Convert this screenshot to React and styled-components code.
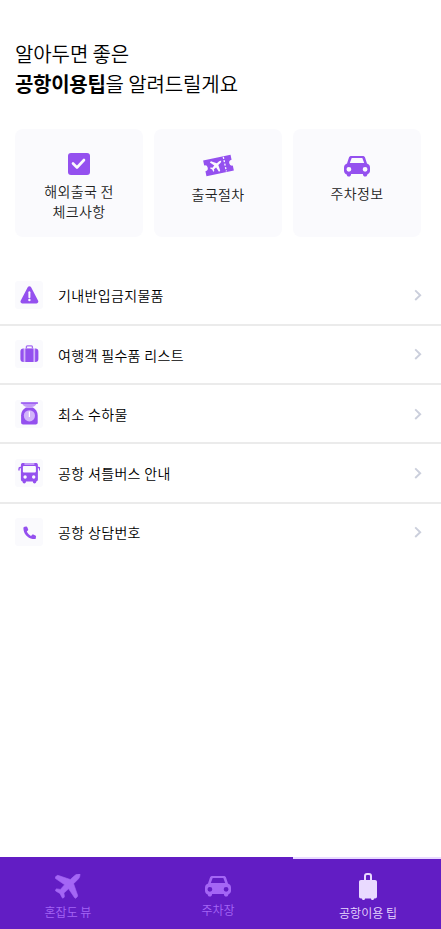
import React from 'react';
import styled, { createGlobalStyle, css } from 'styled-components';

const GlobalStyle = createGlobalStyle`
  * {
    box-sizing: border-box;
  }

  body {
    margin: 0;
    background: #fff;
    color: #000;
    font-family: 'Noto Sans CJK KR', sans-serif;
  }
`;

const Page = styled.div`
  display: flex;
  flex-direction: column;
  height: 100vh;
  overflow: hidden;
`;

const Title = styled.h1`
  margin: 39px 0 0 15px;
  font-size: 20px;
  font-weight: 350;
  line-height: 30px;
  letter-spacing: -0.1px;
  white-space: nowrap;
`;

const Strong = styled.strong`
  font-weight: 700;
  letter-spacing: -0.3px;
`;

const CardList = styled.div`
  display: grid;
  grid-template-columns: repeat(3, 1fr);
  gap: 11px;
  margin: 30px 20px 0 15px;
`;

const Card = styled.button`
  display: flex;
  flex-direction: column;
  align-items: center;
  height: 108px;
  padding: ${(props) => props.$top}px 0 0;
  border: 0;
  border-radius: 8px;
  background: #fafafd;
`;

const CardLabel = styled.span`
  margin-top: ${(props) => props.$gap}px;
  color: #222;
  font-family: 'Noto Sans CJK KR', sans-serif;
  font-size: 14px;
  font-weight: 350;
  line-height: 20px;
  letter-spacing: 0.35px;
  text-align: center;
  white-space: pre-line;
`;

const TipList = styled.ul`
  margin: 29.6px 0 0;
  padding: 0;
  list-style: none;
`;

const TipItem = styled.li`
  display: flex;
  align-items: center;
  height: 59.25px;
  padding: 0 19px 0 15px;
  border-bottom: 2px solid #ebebeb;

  &:last-child {
    border-bottom-color: transparent;
  }
`;

const IconBox = styled.span`
  display: flex;
  align-items: center;
  justify-content: center;
  width: 28px;
  height: 28px;
  border-radius: 3px;
  background: #fafafd;
`;

const TipLabel = styled.span`
  flex: 1;
  margin-left: 15px;
  padding-top: 0.5px;
  font-size: 14px;
  font-weight: 350;
  line-height: 20px;
  letter-spacing: 0.35px;
`;

const TabBar = styled.nav`
  display: grid;
  flex: none;
  grid-template-columns: repeat(3, 150px);
  height: 72px;
  margin-top: auto;
  margin-left: -7px;
  background: #621dc4;
`;

const Tab = styled.a`
  display: flex;
  flex-direction: column;
  align-items: center;
  padding-top: ${(props) => props.$top}px;
  border-top: 2px solid transparent;
  color: #a466f5;

  ${(props) =>
    props.$active &&
    css`
      border-top-color: #e9daff;
      color: #e9daff;
    `}
`;

const TabLabel = styled.span`
  margin-top: ${(props) => props.$gap}px;
  font-size: 12px;
  font-weight: 350;
  line-height: 18px;
`;

const Svg = styled.svg`
  display: block;
  flex: none;
`;

const CheckIcon = () => (
  <Svg width="22" height="22" viewBox="0 0 22 22">
    <rect width="22" height="22" rx="3" fill="#9450ef" />
    <path d="M5 10.500l4 4 7-7.500" fill="none" stroke="#fafafd" strokeWidth="2.600" strokeLinecap="round" strokeLinejoin="round" />
  </Svg>
);

const planePath =
  'M25 0c-2-.3-4 .3-5.3 1.6L15.300 5.500 3.500 1.500C2.700 1.200 2 1.400 1.400 2L.4 3c-.5.600-.4 1.200.2 1.600l9 6.100-4.200 4.700-3.200-.5c-.5-.1-.8 0-1.100.3l-.6.7c-.4.4-.3.900.2 1.200l4.200 2.300 2.300 4.300c.3.600.8.700 1.200.2l.7-.7c.3-.3.400-.6.300-1l-.5-3.200 4.700-4.200 6 8.900c.4.600 1 .7 1.500.2l1-1c.5-.5.700-1.100.4-2L18.600 9.700l4.500-4.500C24.500 3.800 25.100 2 25 0z';

const TicketIcon = () => (
  <Svg width="31" height="23" viewBox="0 0 31 23">
    <g transform="rotate(-12 15.500 11.500)">
      <path d="M1.500 3.500h28v5a3 3 0 0 0 0 6v5h-28v-5a3 3 0 0 0 0-6z" fill="#9450ef" />
      <path d="M22 4v15" stroke="#fafafd" strokeWidth="1.300" strokeDasharray="2 1.500" />
      <g transform="translate(7 6) rotate(12 5 5) scale(.45)">
        <path d={planePath} fill="#fafafd" />
      </g>
    </g>
  </Svg>
);

const CarIcon = () => (
  <Svg width="26" height="21" viewBox="0 0 26 21">
    <path
      fill="currentColor"
      fillRule="evenodd"
      d="M7.500 0h11c1.400 0 2.300.6 2.700 1.900L23 7.500c2 .7 3 2.200 3 4.300v2.900c0 1.400-.6 2.500-1.700 3.100-.4.300-.7.500-1 .6-.2 1.500-1.100 2.200-2.200 2.200S19 19.900 18.900 18H7.100c-.1 1.900-1.100 2.600-2.200 2.600s-2-.7-2.200-2.200C1 17.900 0 16.600 0 14.700v-2.900c0-2.100 1-3.600 3-4.300l1.800-5.600C5.200.6 6.100 0 7.500 0zm.2 2L5.800 7h14.400l-1.900-5zM4.900 10.900a2.400 2.400 0 1 0 0 4.800 2.400 2.400 0 0 0 0-4.800zm16.200 0a2.400 2.400 0 1 0 0 4.800 2.400 2.400 0 0 0 0-4.800z"
    />
  </Svg>
);

const WarningIcon = () => (
  <Svg width="20" height="18" viewBox="-.4 0 20 18">
    <path d="M8.300 1.200c.8-1.400 2.600-1.400 3.400 0l6.900 13.300c.8 1.400 0 2.900-1.600 2.900H3c-1.600 0-2.400-1.500-1.600-2.900z" fill="#9450ef" />
    <path d="M10 6.300v5" stroke="#fafafd" strokeWidth="2" strokeLinecap="round" />
    <circle cx="10" cy="14" r="1.200" fill="#fafafd" />
  </Svg>
);

const SuitcaseIcon = () => (
  <Svg width="20" height="18" viewBox="-.4 0 20 18">
    <path d="M7 3.500V1.800C7 1.200 7.300.9 7.900.9h4.200c.6 0 .9.3.9.9v1.700" fill="none" stroke="#a56bf3" strokeWidth="1.300" />
    <rect x="4" y="3.500" width="12" height="13.500" fill="#d2b5fa" />
    <path d="M4.300 3.500v13.500H4a3 3 0 0 1-3-3V6.500a3 3 0 0 1 3-3zM6 3.500h8v13.500H6zM15.700 3.500H16a3 3 0 0 1 3 3V14a3 3 0 0 1-3 3h-.3z" fill="#9450ef" />
  </Svg>
);

const ScaleIcon = () => (
  <Svg width="18" height="23" viewBox="-.4 .5 18 23">
    <path d="M1.500 1.500h15c-1 2.700-3 4-5.500 4H7c-2.500 0-4.500-1.300-5.500-4z" fill="#c29af8" />
    <path d="M1 1.500h16" stroke="#9450ef" strokeWidth="1.400" strokeLinecap="round" />
    <path d="M5.500 6h7c3 1.500 4.800 4.500 4.800 8v7c0 1.300-.8 2-2 2H2.700c-1.200 0-2-.7-2-2v-7c0-3.500 1.800-6.500 4.800-8z" fill="#9450ef" />
    <circle cx="9" cy="14.300" r="5.600" fill="#d2b5fa" />
    <path d="M9 10v5.500" stroke="#fff" strokeWidth="1.200" />
  </Svg>
);

const BusIcon = () => (
  <Svg width="22" height="22" viewBox="-.4 0 22 22">
    <path d="M3 5.500H1.800C1 5.500.6 6 .6 7v1.500M19 5.500h1.200c.8 0 1.200.5 1.200 1.500v1.500" fill="none" stroke="#9450ef" strokeWidth="1.400" />
    <path d="M4 1h14c1 0 1.500 1 1.500 2.500v14c0 1-.7 1.700-1.700 1.900V20c0 1.900-3.300 1.900-3.300 0v-.5h-7V20c0 1.900-3.300 1.900-3.300 0v-.6c-1-.2-1.700-.9-1.700-1.900v-14C2.500 2 3 1 4 1z" fill="#9450ef" />
    <rect x="6" y="1" width="10" height="2" fill="#c29af8" />
    <rect x="4.500" y="4" width="13" height="6.500" rx="1" fill="#fafafd" />
    <circle cx="6.700" cy="15" r="1.700" fill="#fafafd" />
    <circle cx="15.300" cy="15" r="1.700" fill="#fafafd" />
  </Svg>
);

const PhoneIcon = () => (
  <Svg width="14" height="14" viewBox="-.6 -1 14 14">
    <path
      d="M2 .8l1.500-.2c.6-.1 1 .2 1.200.7l.8 2c.2.500.1 1-.3 1.300L4.200 5.500c.8 1.900 2.200 3.400 4.200 4.400l1-1c.4-.4.8-.5 1.300-.3l2 .8c.5.2.8.700.7 1.200l-.2 1.600c-.1.700-.5 1-1.100 1C5.600 13 .8 8.400.8 2c0-.7.500-1.100 1.200-1.200z"
      fill="#9450ef"
    />
  </Svg>
);

const ArrowIcon = () => (
  <Svg width="8" height="12" viewBox="0.300 -.2 8 12">
    <path d="M1.500 1.200l5 4.800-5 4.800" fill="none" stroke="#cbcfdc" strokeWidth="1.900" />
  </Svg>
);

const PlaneIcon = () => (
  <Svg width="27" height="25" viewBox="0 0 27 25">
    <path d={planePath} fill="currentColor" stroke="currentColor" strokeWidth=".6" />
  </Svg>
);

const LuggageIcon = () => (
  <Svg width="18" height="27" viewBox="0 0 18 27">
    <path d="M6 7V3c0-1.200.7-2 2-2h2c1.300 0 2 .8 2 2v4" fill="none" stroke="currentColor" strokeWidth="2" />
    <path d="M2 7h14c1.300 0 2 .7 2 2v14.500c0 1.300-.7 2-2 2h-1c0 2-3 2-3 0H6c0 2-3 2-3 0H2c-1.300 0-2-.7-2-2V9c0-1.300.7-2 2-2z" fill="currentColor" />
  </Svg>
);

const Purple = styled.span`
  color: #9450ef;
`;

const tips = [
  { label: '기내반입금지물품', icon: <WarningIcon /> },
  { label: '여행객 필수품 리스트', icon: <SuitcaseIcon /> },
  { label: '최소 수하물', icon: <ScaleIcon /> },
  { label: '공항 셔틀버스 안내', icon: <BusIcon /> },
  { label: '공항 상담번호', icon: <PhoneIcon /> },
];

export default () => (
  <>
    <GlobalStyle />
    <Page>
      <Title>
        알아두면 좋은
        <br />
        <Strong>공항이용팁</Strong>을 알려드릴게요
      </Title>

      {/* Cards */}
      <CardList>
        <Card $top={24}>
          <CheckIcon />
          <CardLabel $gap={6}>{'해외출국 전\n체크사항'}</CardLabel>
        </Card>
        <Card $top={25}>
          <TicketIcon />
          <CardLabel $gap={7}>출국절차</CardLabel>
        </Card>
        <Card $top={27}>
          <Purple>
            <CarIcon />
          </Purple>
          <CardLabel $gap={6}>주차정보</CardLabel>
        </Card>
      </CardList>

      {/* Tips */}
      <TipList>
        {tips.map((tip) => (
          <TipItem key={tip.label}>
            <IconBox>{tip.icon}</IconBox>
            <TipLabel>{tip.label}</TipLabel>
            <ArrowIcon />
          </TipItem>
        ))}
      </TipList>

      {/* Tabs */}
      <TabBar>
        <Tab $top={15}>
          <PlaneIcon />
          <TabLabel $gap={4}>혼잡도 뷰</TabLabel>
        </Tab>
        <Tab $top={17}>
          <CarIcon />
          <TabLabel $gap={4}>주차장</TabLabel>
        </Tab>
        <Tab $top={14} $active>
          <LuggageIcon />
          <TabLabel $gap={4}>공항이용 팁</TabLabel>
        </Tab>
      </TabBar>
    </Page>
  </>
);
